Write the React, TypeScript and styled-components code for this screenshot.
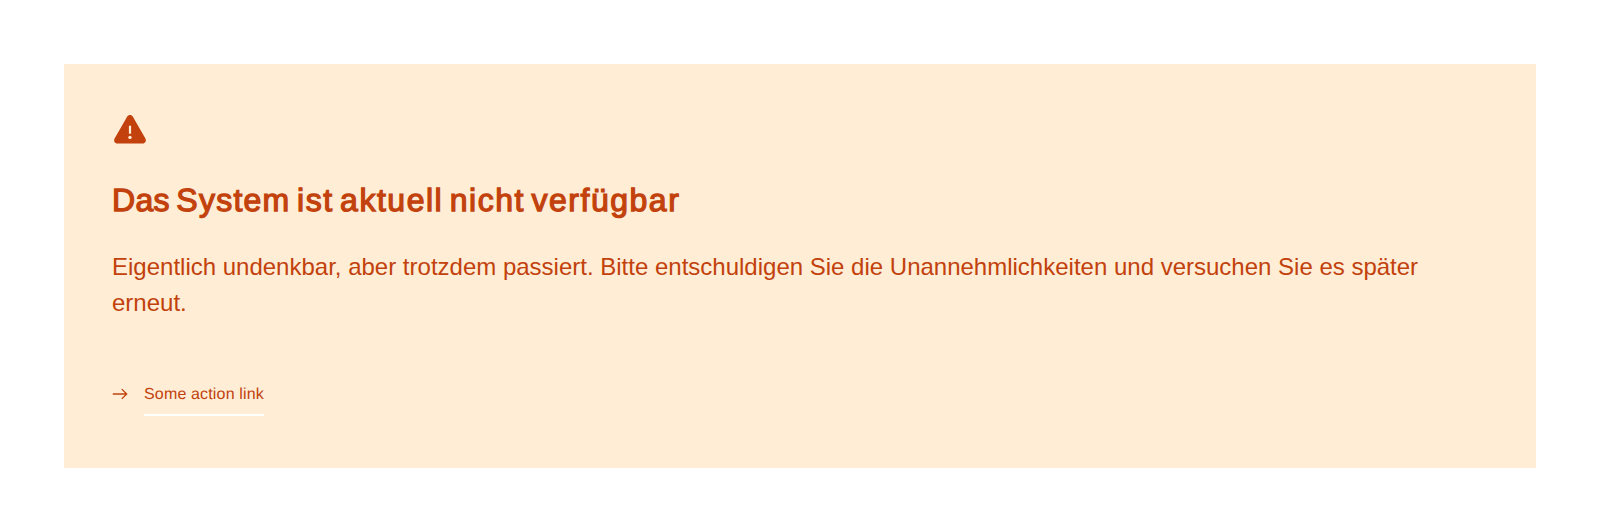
import React from "react";
import styled, { createGlobalStyle } from "styled-components";

const Global = createGlobalStyle`
  body { margin: 0; background: #fff; }
`;
const Page = styled.main`
  padding: 64px;
`;
const Alert = styled.section`
  box-sizing: border-box;
  height: 404px;
  padding: 48px;
  background: #ffedd5;
  color: #c2410c;
  font-family: "Liberation Sans", Arial, sans-serif;
`;
const WarningIcon = styled.svg`
  display: block;
  width: 36px;
  height: 36px;
`;
const Title = styled.h2`
  margin: 32px 0 0;
  font-size: 32px;
  font-weight: 400;
  line-height: 40px;
  letter-spacing: 1.52px;
  word-spacing: -3.9px;
  text-rendering: geometricPrecision;
  -webkit-text-stroke: 1.25px currentColor;
`;
const Tracked = styled.span<{ $spacing: number }>`
  letter-spacing: ${({ $spacing }) => $spacing}px;
`;
const Text = styled.p`
  margin: 29px 0 0;
  font-size: 24px;
  line-height: 36px;
`;
const ActionLink = styled.a`
  display: inline-flex;
  align-items: flex-start;
  gap: 16px;
  margin-top: 61px;
  color: inherit;
  text-decoration: none;
`;
const ArrowIcon = styled.svg`
  width: 16px;
  height: 24px;
`;
const Label = styled.span`
  font-size: 16px;
  line-height: 26px;
  letter-spacing: 0.01em;
  text-rendering: geometricPrecision;
  padding-bottom: 6px;
  border-bottom: 2px solid #fff;
`;

export default function App() {
  return (
    <Page>
      <Global />
      <Alert>
        <WarningIcon viewBox="0 0 36 36" aria-hidden="true">
          <path fill="currentColor" d="M15.1 4.8C16.4 2.5 19.6 2.5 20.9 4.8L33.4 26.5C34.7 28.8 33.2 31.6 30.6 31.6H5.4C2.8 31.6 1.3 28.8 2.6 26.5Z" />
          <path stroke="#ffedd5" strokeWidth="2.2" d="M18 13.7v8" />
          <circle cx="18" cy="25.4" r="1.7" fill="#ffedd5" />
        </WarningIcon>
        <Title>
          <Tracked $spacing={0.3}>Das</Tracked> <Tracked $spacing={1.25}>System</Tracked> ist aktuell nicht verfügbar
        </Title>
        <Text>Eigentlich undenkbar, aber trotzdem passiert. Bitte entschuldigen Sie die Unannehmlichkeiten und versuchen Sie es später erneut.</Text>
        <ActionLink href="#">
          <ArrowIcon
            viewBox="0 0 16 24"
            fill="none"
            stroke="currentColor"
            strokeWidth="1.3"
            aria-hidden="true"
          >
            <path d="M.8 12H15M9.8 7.1l4.9 4.9-4.9 4.9" />
          </ArrowIcon>
          <Label>Some action link</Label>
        </ActionLink>
      </Alert>
    </Page>
  );
}
